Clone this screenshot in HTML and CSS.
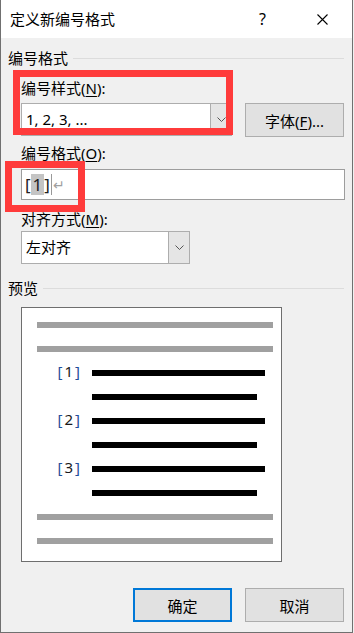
FILE: index.html
```html
<!DOCTYPE html>
<html lang="zh-CN">
<head>
  <meta charset="UTF-8">
  <title>定义新编号格式</title>
  <link rel="stylesheet" href="styles.css">
</head>
<body>
  <div class="dlg">
    <div class="dlg--title">
      <span class="dlg--title-text">定义新编号格式</span>
      <span class="dlg--help">?</span>
      <svg class="dlg--close" width="11" height="11" viewBox="0 0 11 11"><path d="M0.5 0.5L10.5 10.5M10.5 0.5L0.5 10.5" stroke="#000" stroke-width="1.1" fill="none"/></svg>
    </div>

    <div class="dlg--body">
      <div class="grp-head"><span>编号格式</span><i></i></div>
      <div class="fields">
        <div class="lbl">编号样式(<u>N</u>):</div>
        <div class="row">
          <div class="combo combo--style">
            <span class="combo--val">1, 2, 3, ...</span>
            <span class="combo--btn"><svg width="9" height="5" viewBox="0 0 9 5"><path d="M0.5 0.5L4.5 4.5L8.5 0.5" stroke="#555" fill="none"/></svg></span>
          </div>
          <button type="button" class="btn btn--font">字体(<u>F</u>)...</button>
        </div>
        <div class="lbl lbl--fmt">编号格式(<u>O</u>):</div>
        <div class="txt"><span>[</span><span class="sel">1</span><span>]</span><span class="caret"></span><span class="ret">↵</span></div>
        <div class="lbl lbl--align">对齐方式(<u>M</u>):</div>
        <div class="combo combo--align">
          <span class="combo--val">左对齐</span>
          <span class="combo--btn"><svg width="9" height="5" viewBox="0 0 9 5"><path d="M0.5 0.5L4.5 4.5L8.5 0.5" stroke="#555" fill="none"/></svg></span>
        </div>
      </div>

      <div class="grp-head grp-head--preview"><span>预览</span><i></i></div>
      <div class="preview">
        <div class="pv-bar"></div>
        <div class="pv-bar"></div>
        <div class="pv-row"><span class="pv-num"><b>[</b>1<b>]</b></span><span class="pv-line"></span></div>
        <div class="pv-row"><span class="pv-num"></span><span class="pv-line pv-line--short"></span></div>
        <div class="pv-row"><span class="pv-num"><b>[</b>2<b>]</b></span><span class="pv-line"></span></div>
        <div class="pv-row"><span class="pv-num"></span><span class="pv-line pv-line--short"></span></div>
        <div class="pv-row"><span class="pv-num"><b>[</b>3<b>]</b></span><span class="pv-line"></span></div>
        <div class="pv-row"><span class="pv-num"></span><span class="pv-line pv-line--short"></span></div>
        <div class="pv-bar"></div>
        <div class="pv-bar"></div>
      </div>

      <div class="dlg--foot">
        <button type="button" class="btn btn--ok">确定</button>
        <button type="button" class="btn">取消</button>
      </div>
    </div>

    <div class="mark mark--style"></div>
    <div class="mark mark--fmt"></div>
  </div>
</body>
</html>
```

FILE: styles.css
```css
html,body{margin: 0; padding: 0; background-color: #f0f0f0; height: 100%; overflow: hidden;}
*{box-sizing: border-box;}
body{font-family: "Noto Sans", "Noto Sans CJK SC", sans-serif; font-size: 15px; color: #000;}
u{text-decoration: underline; text-underline-offset: 2px;}

.dlg{
  position: relative;
  width: 353px;
  height: 633px;
  background-color: #f0f0f0;
  border: solid 1px #707070;
  border-top: 0;
}
.dlg--title{
  display: flex;
  align-items: center;
  height: 38px;
  background-color: #fff;
  padding-left: 9px;
}
.dlg--title-text{flex: 1; line-height: 20px;}
.dlg--help{width: 10px; margin-right: 48px; font-size: 16px; line-height: 20px;}
.dlg--close{margin-right: 24px;}

.dlg--body{padding: 0 8px 0 7px;}

.grp-head{
  display: flex;
  align-items: center;
  margin-top: 10px;
  height: 20px;
  line-height: 20px;
}
.grp-head i{flex: 1; height: 1px; background-color: #dcdcdc; margin-left: 5px; margin-right: 0;}
.grp-head--preview{margin-top: 14px;}

.fields{padding-left: 13px;}
.lbl{height: 20px; line-height: 20px; margin-top: 10px;}
.lbl--fmt{margin-top: 6px;}
.lbl--align{margin-top: 9px;}

.row{display: flex; gap: 13px; margin-top: 5px;}

.combo{
  display: flex;
  height: 33px;
  background-color: #fff;
  border: solid 1px #adadad;
}
.combo--style{width: 211px;}
.combo--align{width: 169px; margin-top: 2px;}
.combo--val{flex: 1; padding-left: 4px; line-height: 31px;}
.combo--btn{
  display: flex;
  align-items: center;
  justify-content: center;
  width: 21px;
  background-color: #e5e5e5;
  border-left: solid 1px #adadad;
}

.btn{
  width: 99px;
  height: 34px;
  padding: 0;
  font: inherit;
  color: #000;
  background-color: #e1e1e1;
  border: solid 1px #adadad;
}
.btn--font{height: 34px;}
.btn--ok{border: solid 2px #0078d7;}

.txt{
  display: flex;
  align-items: center;
  width: 324px;
  height: 31px;
  margin-top: 6px;
  padding-left: 3px;
  font-size: 17px;
  color: #222;
  background-color: #fff;
  border: solid 1px #9d9d9d;
}
.txt .sel{background-color: #c4c4c4; padding: 0 2px; line-height: 21px;}
.txt .caret{width: 1px; height: 21px; background-color: #999; margin-left: 1px;}
.txt .ret{color: #a0a0a0; font-size: 14px; margin-left: 1px;}

.preview{
  display: flex;
  flex-direction: column;
  gap: 18px;
  width: 261px;
  margin: 9px 0 0 13px;
  padding: 14px 0 17px 15px;
  background-color: #fff;
  border: solid 1px #6e6e6e;
}
.pv-bar{width: 236px; height: 6px; background-color: #a0a0a0;}
.pv-row{display: flex; align-items: center; height: 6px;}
.pv-num{
  width: 55px;
  padding-right: 12px;
  margin-bottom: 5px;
  text-align: right;
  font-size: 15px;
  line-height: 16px;
  color: #1a1a1a;
  letter-spacing: 2px;
}
.pv-num b{font-weight: normal; color: #1f4e9a;}
.pv-num b:last-child{letter-spacing: 0;}
.pv-line{width: 173px; height: 6px; background-color: #000;}
.pv-line--short{width: 165px;}

.dlg--foot{
  display: flex;
  justify-content: flex-end;
  gap: 13px;
  margin-top: 26px;
}

/* red annotation frames */
.mark{position: absolute; border: solid 7px #ff3b3b;}
.mark--style{left: 12px; top: 70px; width: 220px; height: 65px;}
.mark--fmt{left: 4px; top: 161px; width: 80px; height: 51px;}
```
